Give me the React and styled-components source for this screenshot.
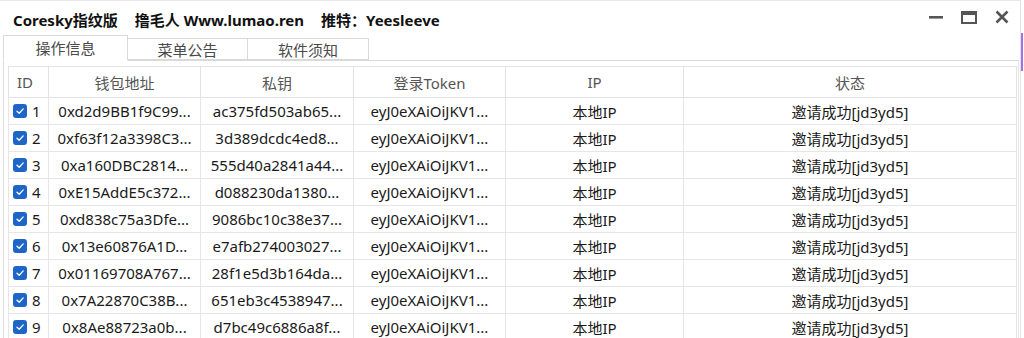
import React from "react";
import styled, { createGlobalStyle } from "styled-components";

const Global = createGlobalStyle`
  html, body { margin: 0; padding: 0; background: #ffffff; overflow: hidden; }
  body { font-family: "Noto Sans", "Noto Sans CJK SC", sans-serif; }
  * { box-sizing: border-box; }
`;

const Page = styled.div`
  display: flex;
  width: 1024px;
  height: 338px;
  background: #ffffff;
`;

const Window = styled.div`
  width: 1021px;
  height: 338px;
  border-top: 1px solid #e8e8e8;
  border-right: 1px solid #e4e4e4;
  display: flex;
  flex-direction: column;
  background: #ffffff;
  overflow: hidden;
`;

const Edge = styled.div`
  width: 3px;
  display: flex;
  flex-direction: column;
  padding-top: 33px;
`;

const EdgeMark = styled.div`
  width: 2px;
  height: 38px;
  background: #a36ef2;
`;

const TitleBar = styled.div`
  height: 34px;
  flex: none;
  display: flex;
  align-items: center;
  padding-left: 13px;
  padding-top: 2px;
`;

const Title = styled.div`
  display: flex;
  gap: 17px;
  font-family: "Noto Sans", "Noto Sans CJK SC", sans-serif;
  font-weight: 700;
  font-size: 15px;
  color: #111111;
  white-space: nowrap;
`;

const Controls = styled.div`
  margin-left: auto;
  display: flex;
  align-items: center;
  padding-right: 2px;
  margin-top: -4px;
`;

const CtrlBtn = styled.div`
  width: 33px;
  height: 20px;
  display: flex;
  align-items: center;
  justify-content: center;
`;

const TabBar = styled.div`
  height: 25px;
  flex: none;
  display: flex;
  align-items: flex-end;
  padding-left: 3px;
`;

const Tab = styled.div`
  position: relative;
  width: ${(p) => p.$w}px;
  height: ${(p) => (p.$active ? 26 : 22)}px;
  margin-bottom: ${(p) => (p.$active ? -1 : 0)}px;
  margin-left: ${(p) => (p.$first ? 0 : -1)}px;
  border: 1px solid #d9d9d9;
  border-bottom-color: ${(p) => (p.$active ? "#ffffff" : "#d9d9d9")};
  background: #ffffff;
  z-index: ${(p) => (p.$active ? 2 : 1)};
  display: flex;
  align-items: center;
  justify-content: center;
  font-size: 15px;
  color: #4a4a4a;
  font-family: "Noto Sans CJK SC", sans-serif;
  padding-bottom: ${(p) => (p.$active ? 2 : 0)}px;
`;

const Panel = styled.div`
  flex: 1;
  margin-left: 3px;
  margin-right: 1px;
  border-top: 1px solid #d9d9d9;
  border-left: 1px solid #dcdcdc;
  border-right: 1px solid #e6e6e6;
  padding: 5px 3px 0 4px;
  overflow: hidden;
`;

const Table = styled.table`
  border-collapse: collapse;
  table-layout: fixed;
  width: 1008px;
  font-family: "Noto Sans", "Noto Sans CJK SC", sans-serif;
  font-size: 15px;
`;

const Th = styled.th`
  height: 31px;
  border: 1px solid #e2e2e2;
  font-weight: 400;
  color: #555555;
  text-align: ${(p) => (p.$left ? "left" : "center")};
  padding: 0 0 0 ${(p) => (p.$left ? 8 : 0)}px;
  white-space: nowrap;
  overflow: hidden;
`;

const Td = styled.td`
  height: 27px;
  border: 1px solid #e6e6e6;
  color: #1a1a1a;
  text-align: center;
  padding: 0;
  white-space: nowrap;
  overflow: hidden;
`;

const IdCell = styled.div`
  display: flex;
  align-items: center;
  gap: 5px;
  padding-left: 4px;
`;

const Check = styled.span`
  width: 14px;
  height: 14px;
  min-width: 14px;
  border-radius: 3px;
  background: #1d66c8;
  display: inline-flex;
  align-items: center;
  justify-content: center;
  flex: none;
`;

const cols = [40, 152, 153, 152, 178, 333];

const rows = [
  ["0xd2d9BB1f9C99...", "ac375fd503ab65...", "eyJ0eXAiOiJKV1..."],
  ["0xf63f12a3398C3...", "3d389dcdc4ed8...", "eyJ0eXAiOiJKV1..."],
  ["0xa160DBC2814...", "555d40a2841a44...", "eyJ0eXAiOiJKV1..."],
  ["0xE15AddE5c372...", "d088230da1380...", "eyJ0eXAiOiJKV1..."],
  ["0xd838c75a3Dfe...", "9086bc10c38e37...", "eyJ0eXAiOiJKV1..."],
  ["0x13e60876A1D...", "e7afb274003027...", "eyJ0eXAiOiJKV1..."],
  ["0x01169708A767...", "28f1e5d3b164da...", "eyJ0eXAiOiJKV1..."],
  ["0x7A22870C38B...", "651eb3c4538947...", "eyJ0eXAiOiJKV1..."],
  ["0x8Ae88723a0b...", "d7bc49c6886a8f...", "eyJ0eXAiOiJKV1..."],
];

function CheckIcon() {
  return (
    <svg width="10" height="10" viewBox="0 0 10 10">
      <path d="M2 5.2 L4.2 7.3 L8.2 2.9" fill="none" stroke="#ffffff" strokeWidth="1.3" strokeLinecap="round" strokeLinejoin="round" />
    </svg>
  );
}

export default function App() {
  return (
    <>
      <Global />
      <Page>
        <Window>
          <TitleBar>
            <Title>
              <span>Coresky指纹版</span>
              <span>撸毛人 Www.lumao.ren</span>
              <span>推特：Yeesleeve</span>
            </Title>
            <Controls>
              <CtrlBtn>
                <svg width="14" height="14" viewBox="0 0 14 14">
                  <rect x="0" y="6" width="14" height="2.6" fill="#555" />
                </svg>
              </CtrlBtn>
              <CtrlBtn>
                <svg width="16" height="13" viewBox="0 0 16 13">
                  <rect x="1" y="1" width="14" height="11" fill="none" stroke="#555" strokeWidth="2" />
                  <rect x="1" y="1" width="14" height="3" fill="#555" />
                </svg>
              </CtrlBtn>
              <CtrlBtn>
                <svg width="14" height="14" viewBox="0 0 14 14">
                  <path d="M1.5 1.5 L12.5 12.5 M12.5 1.5 L1.5 12.5" stroke="#555" strokeWidth="2.6" />
                </svg>
              </CtrlBtn>
            </Controls>
          </TitleBar>
          <TabBar>
            <Tab $active $first $w={125}>操作信息</Tab>
            <Tab $w={121}>菜单公告</Tab>
            <Tab $w={122}>软件须知</Tab>
          </TabBar>
          <Panel>
            <Table>
              <colgroup>
                {cols.map((w, i) => (
                  <col key={i} style={{ width: w }} />
                ))}
              </colgroup>
              <thead>
                <tr>
                  <Th $left>ID</Th>
                  <Th>钱包地址</Th>
                  <Th>私钥</Th>
                  <Th>登录Token</Th>
                  <Th>IP</Th>
                  <Th>状态</Th>
                </tr>
              </thead>
              <tbody>
                {rows.map((r, i) => (
                  <tr key={i}>
                    <Td>
                      <IdCell>
                        <Check>
                          <CheckIcon />
                        </Check>
                        <span>{i + 1}</span>
                      </IdCell>
                    </Td>
                    <Td>{r[0]}</Td>
                    <Td>{r[1]}</Td>
                    <Td>{r[2]}</Td>
                    <Td>本地IP</Td>
                    <Td>邀请成功[jd3yd5]</Td>
                  </tr>
                ))}
              </tbody>
            </Table>
          </Panel>
        </Window>
        <Edge>
          <EdgeMark />
        </Edge>
      </Page>
    </>
  );
}
